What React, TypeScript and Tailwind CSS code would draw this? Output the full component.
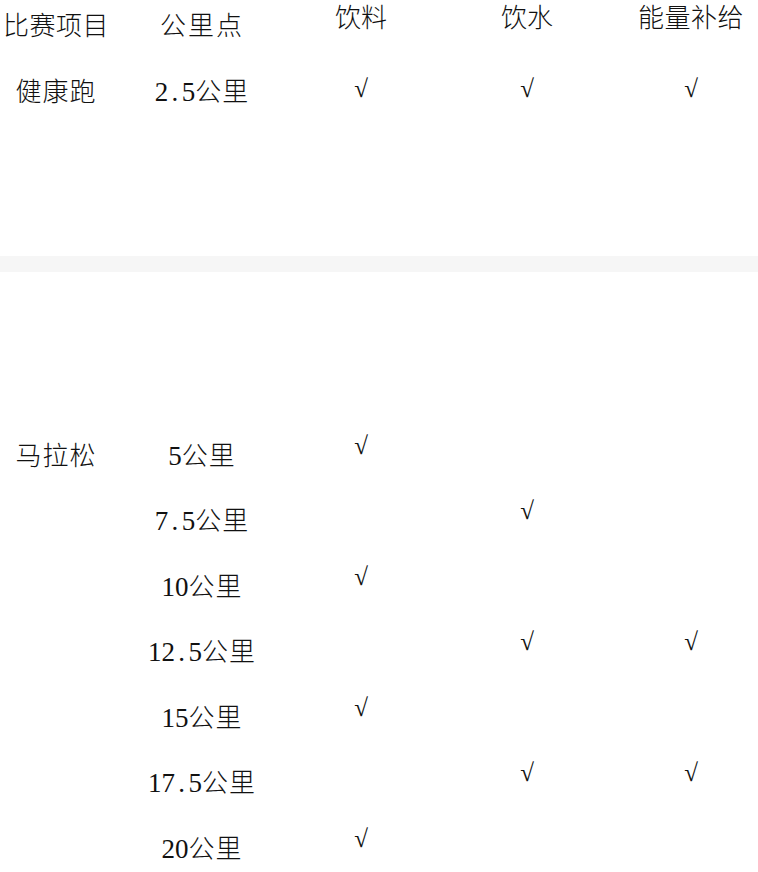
const cjk = "font-['Noto_Sans_CJK_SC',sans-serif] font-light";

const cols = "grid grid-cols-[112px_180px_138px_194px_1fr]";

type Row = { name?: string; km: string; drink?: boolean; water?: boolean; energy?: boolean };

const shortRace: Row[] = [{ name: "健康跑", km: "2.5", drink: true, water: true, energy: true }];

const marathon: Row[] = [
  { name: "马拉松", km: "5", drink: true },
  { km: "7.5", water: true },
  { km: "10", drink: true },
  { km: "12.5", water: true, energy: true },
  { km: "15", drink: true },
  { km: "17.5", water: true, energy: true },
  { km: "20", drink: true },
];

function Km({ value }: { value: string }) {
  return (
    <span className="inline-flex items-baseline">
      <span className="font-['Liberation_Serif',serif] text-[27px] leading-none">
        {value.split("").map((c, i) =>
          c === "." ? (
            <span key={i} className="inline-block w-[13.5px] text-center">
              .
            </span>
          ) : (
            <span key={i}>{c}</span>
          ),
        )}
      </span>
      <span className="tracking-[1px]">公里</span>
    </span>
  );
}

function Check({ lift }: { lift: string }) {
  return (
    <div className={`flex justify-center ${lift}`}>
      <span className="font-['Liberation_Serif',serif] text-[25px] leading-none">√</span>
    </div>
  );
}

function RaceRow({ row, lift }: { row: Row; lift: string }) {
  return (
    <div className={`${cols} h-[65.5px] items-center text-[26px] text-[#111] ${cjk}`}>
      <div className="text-center tracking-[1px]">{row.name}</div>
      <div className="text-center">
        <Km value={row.km} />
      </div>
      <div>{row.drink && <Check lift={lift} />}</div>
      <div>{row.water && <Check lift={lift} />}</div>
      <div>{row.energy && <Check lift={lift} />}</div>
    </div>
  );
}

export default function App() {
  return (
    <div className="min-h-[872px] w-[758px] bg-white">
      {/* header */}
      <div className={`${cols} h-[48px] items-center text-[26px] leading-[28px] text-[#111] ${cjk}`}>
        <div className="text-center tracking-[0.5px]">比赛项目</div>
        <div className="text-center tracking-[2px]">公里点</div>
        <div className="pb-[16px] text-center">饮料</div>
        <div className="pb-[16px] text-center">饮水</div>
        <div className="pb-[16px] text-center tracking-[0.5px]">能量补给</div>
      </div>

      <div className="pt-[9px]">
        {shortRace.map((r) => (
          <RaceRow key={r.km} row={r} lift="pb-[2px]" />
        ))}
      </div>

      <div className="mt-[133px] h-[16px] bg-[#f6f6f6]" />

      <div className="pt-[149px]">
        {marathon.map((r) => (
          <RaceRow key={r.km} row={r} lift="pb-[16px]" />
        ))}
      </div>
    </div>
  );
}
